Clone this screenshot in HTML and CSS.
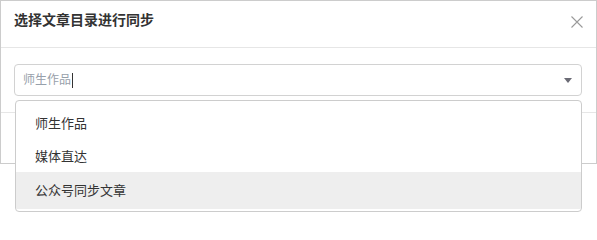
FILE: index.html
```html
<!DOCTYPE html>
<html lang="zh-CN">
<head>
<meta charset="utf-8">
<title>选择文章目录进行同步</title>
<link rel="stylesheet" href="styles.css">
</head>
<body>
<div class="page">
<div class="modal">
  <div class="modal-header">
    <div class="modal-title">选择文章目录进行同步</div>
    <svg class="close" width="12" height="12" viewBox="0 0 12 12" aria-label="关闭">
      <path d="M0.5 0.5 L11.5 11.5 M11.5 0.5 L0.5 11.5" stroke="#9a9a9a" stroke-width="1.1" fill="none"/>
    </svg>
  </div>
  <div class="modal-body">
    <div class="select">
      <div class="select-input">
        <span class="select-text">师生作品</span><span class="caret"></span>
        <span class="spacer"></span>
        <span class="arrow"></span>
      </div>
      <ul class="dropdown">
        <li class="option">师生作品</li>
        <li class="option">媒体直达</li>
        <li class="option option-hover">公众号同步文章</li>
      </ul>
    </div>
  </div>
  <div class="modal-footer"></div>
</div>
</div>
</body>
</html>
```

FILE: styles.css
```css
* { box-sizing: border-box; }

html, body {
  margin: 0;
  padding: 0;
  background: #fff;
}

body {
  font-family: "Liberation Sans", "Noto Sans CJK SC", sans-serif;
  color: #333;
}

.page {
  min-height: 213px;
  width: 597px;
}

.modal {
  width: 597px;
  border: 1px solid #cccccc;
  background: #fff;
}

.modal-header {
  height: 47px;
  border-bottom: 1px solid #e6e6e6;
  display: flex;
  justify-content: space-between;
  align-items: flex-start;
  padding: 0 13px 0 13px;
}

.modal-title {
  margin-top: 8px;
  font-size: 14px;
  line-height: 22px;
  font-weight: bold;
  color: #333;
}

.close {
  margin-top: 15px;
  display: block;
}

.modal-body {
  padding: 16px 14px 16px 13px;
}

.select {
  position: relative;
}

.select-input {
  height: 32px;
  border: 1px solid #d2d2d2;
  border-radius: 4px;
  display: flex;
  align-items: center;
  padding: 0 9px 0 8px;
}

.select-text {
  font-size: 12px;
  line-height: 16px;
  color: #97a0aa;
}

.caret {
  display: block;
  width: 1px;
  height: 15px;
  background: #333;
  margin-left: 1px;
}

.spacer {
  flex: 1;
}

.arrow {
  display: block;
  width: 0;
  height: 0;
  border-left: 4px solid transparent;
  border-right: 4px solid transparent;
  border-top: 5px solid #6b6b75;
  margin-top: 1px;
}

.dropdown {
  position: absolute;
  top: calc(100% + 4px);
  left: 1px;
  right: 0;
  margin: 0;
  padding: 6px 0 2px 0;
  list-style: none;
  background: #fff;
  border: 1px solid #cccccc;
  border-radius: 4px;
  z-index: 10;
}

.option {
  height: 33px;
  line-height: 33px;
  padding-left: 19px;
  font-size: 13px;
  color: #333;
}

.option-hover {
  margin-top: -1px;
  height: 37px;
  line-height: 37px;
  background: #eeeeee;
}

.modal-footer {
  height: 51px;
  border-top: 1px solid #e6e6e6;
}
```
